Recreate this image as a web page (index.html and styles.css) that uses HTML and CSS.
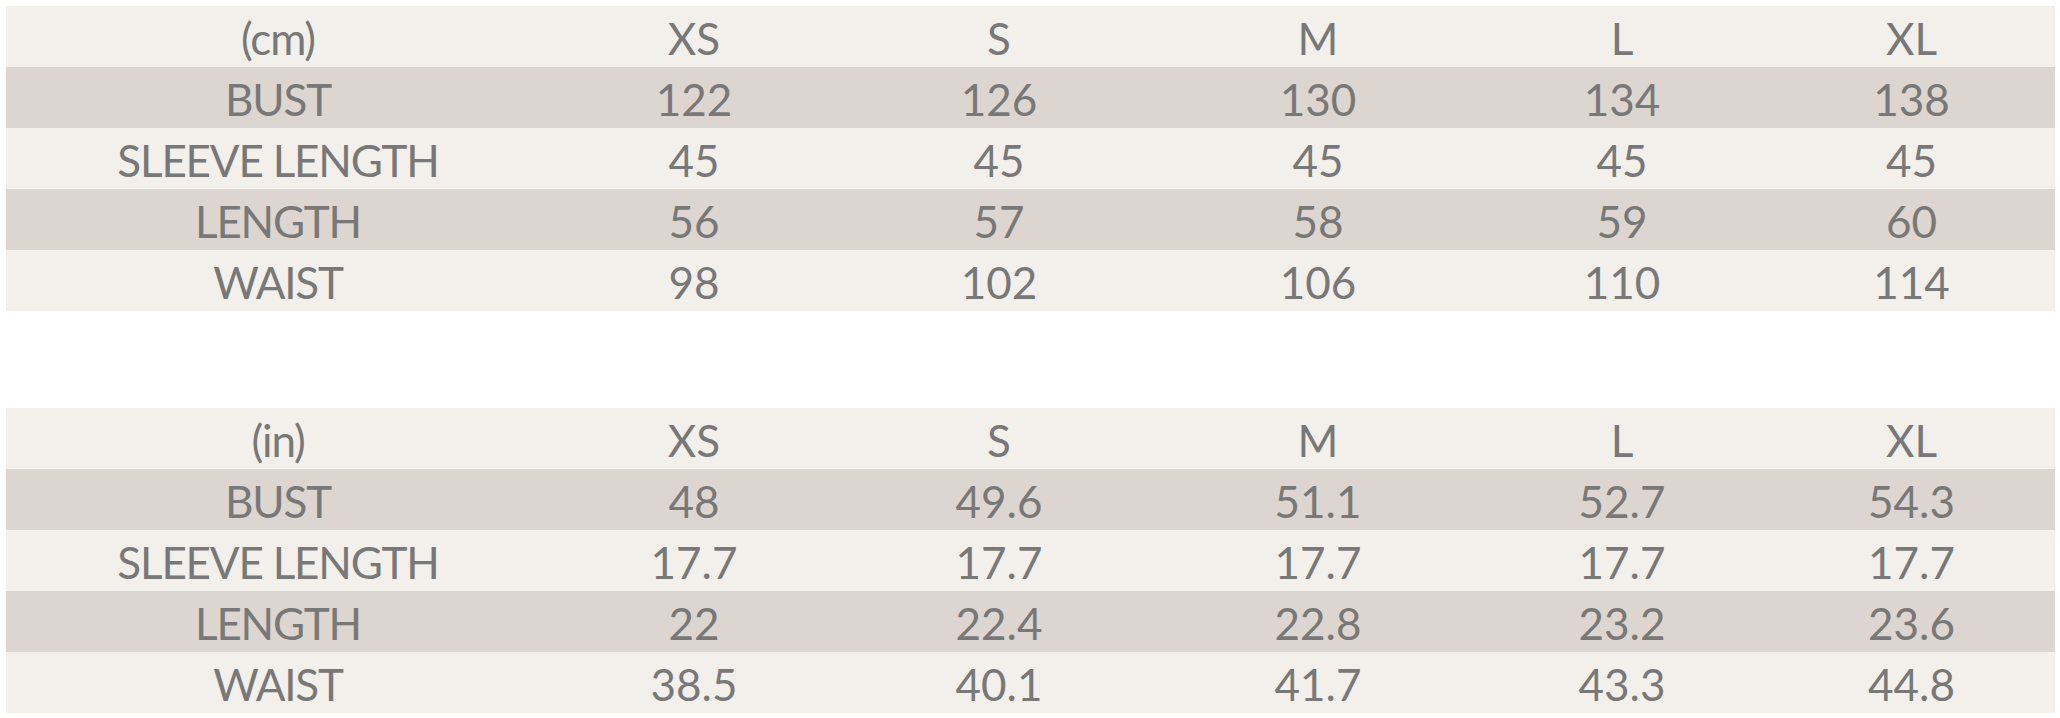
FILE: index.html
```html
<!DOCTYPE html>
<html>
<head>
<meta charset="utf-8">
<link rel="stylesheet" href="styles.css">
</head>
<body>
<div class="page">
  <div class="chart">
    <div class="row light"><div class="label">(cm)</div><div>XS</div><div>S</div><div>M</div><div>L</div><div>XL</div></div>
    <div class="row dark"><div class="label">BUST</div><div>122</div><div>126</div><div>130</div><div>134</div><div>138</div></div>
    <div class="row light"><div class="label">SLEEVE LENGTH</div><div>45</div><div>45</div><div>45</div><div>45</div><div>45</div></div>
    <div class="row dark"><div class="label">LENGTH</div><div>56</div><div>57</div><div>58</div><div>59</div><div>60</div></div>
    <div class="row light"><div class="label">WAIST</div><div>98</div><div>102</div><div>106</div><div>110</div><div>114</div></div>
  </div>
  <div class="chart">
    <div class="row light"><div class="label">(in)</div><div>XS</div><div>S</div><div>M</div><div>L</div><div>XL</div></div>
    <div class="row dark"><div class="label">BUST</div><div>48</div><div>49.6</div><div>51.1</div><div>52.7</div><div>54.3</div></div>
    <div class="row light"><div class="label">SLEEVE LENGTH</div><div>17.7</div><div>17.7</div><div>17.7</div><div>17.7</div><div>17.7</div></div>
    <div class="row dark"><div class="label">LENGTH</div><div>22</div><div>22.4</div><div>22.8</div><div>23.2</div><div>23.6</div></div>
    <div class="row light"><div class="label">WAIST</div><div>38.5</div><div>40.1</div><div>41.7</div><div>43.3</div><div>44.8</div></div>
  </div>
</div>
</body>
</html>
```
FILE: styles.css
```css
html, body {
  margin: 0;
  padding: 0;
  background: #ffffff;
}
.page {
  padding: 6px 0 0 6px;
  display: flex;
  flex-direction: column;
  gap: 97px;
}
.chart {
  width: 2049px;
  display: flex;
  flex-direction: column;
}
.row {
  display: grid;
  grid-template-columns: 544px 288px 322px 316px 292px 287px;
  height: 61px;
  font-family: Lato, "Open Sans", sans-serif;
  font-size: 44px;
  color: #787878;
}
.row > div {
  display: flex;
  align-items: center;
  justify-content: center;
  line-height: 1;
  padding-top: 3px;
}
.row > .label {
  letter-spacing: -1.2px;
}
.light { background: #f3f0eb; }
.dark { background: #ddd5cf; }
```
